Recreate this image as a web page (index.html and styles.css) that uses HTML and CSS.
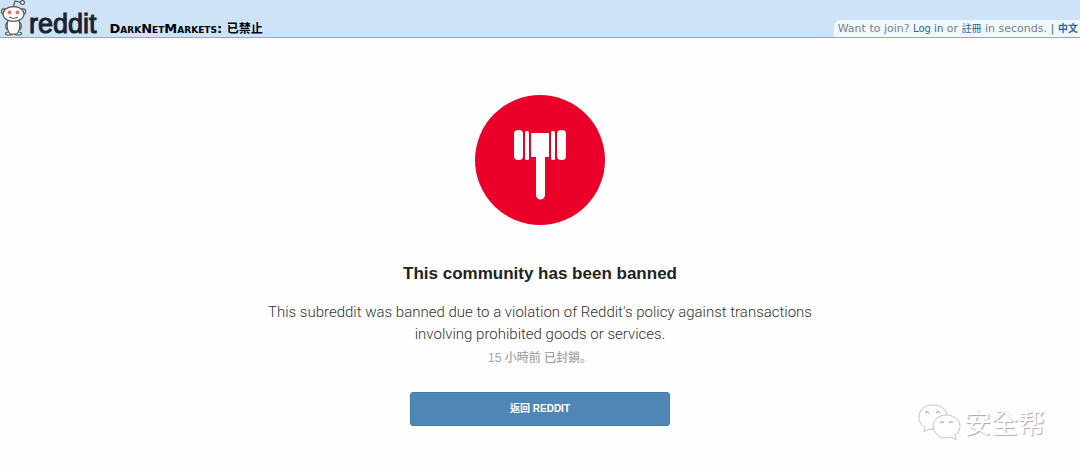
FILE: index.html
```html
<!DOCTYPE html>
<html lang="zh-Hant">
<head>
<meta charset="utf-8">
<meta name="viewport" content="width=device-width, initial-scale=1">
<title>DarkNetMarkets: 已禁止</title>
<link rel="stylesheet" href="styles.css">
</head>
<body>
<header class="header">
  <a class="logo" href="#" aria-label="reddit">
    <svg class="alien" viewBox="0 0 27 37" aria-hidden="true">
      <g fill="#fff" stroke="#555" stroke-width="1.2">
        <path d="M13 8 15 1 21 2.500" fill="none"/>
        <circle cx="22.500" cy="2.500" r="1.900"/>
        <circle cx="4" cy="11.500" r="2.600"/>
        <circle cx="23" cy="11.500" r="2.600"/>
        <path d="M8 22C5 23 5 29 8 30M19 22C22 23 22 29 19 30"/>
        <ellipse cx="9" cy="33.500" rx="3.500" ry="1.500"/>
        <ellipse cx="18" cy="33.500" rx="3.500" ry="1.500"/>
        <path d="M8 20h11c1.500 5 1 10-2 14h-7C7 30 6.500 25 8 20Z"/>
        <ellipse cx="13.500" cy="14" rx="10.500" ry="7.300"/>
      </g>
      <circle cx="9.500" cy="12.300" r="1.900" fill="#e8705a"/>
      <circle cx="17.500" cy="12.300" r="1.900" fill="#e8705a"/>
      <path d="M9 17q4.500 3 9 0" fill="none" stroke="#555"/>
    </svg>
    <span class="wordmark">reddit</span>
  </a>
  <h1 class="pagename">DarkNetMarkets: <span class="status">已禁止</span></h1>
  <div class="userbar">Want to join? <a href="#">Log in</a> or <a href="#">註冊</a> in seconds. <span class="sep">|</span> <a class="lang" href="#">中文</a></div>
</header>
<main class="notice">
  <svg class="gavel" viewBox="0 0 130 130" role="img" aria-label="Banned">
    <circle cx="65" cy="65" r="65" fill="#eb0029"/>
    <g fill="#fff">
      <rect x="39" y="35" width="9" height="30" rx="4"/>
      <rect x="50" y="36" width="4" height="29" rx="1.500"/>
      <path d="M56 38h18v24h-4v38a4.500 4.500 0 0 1-9 0V62h-5z"/>
      <rect x="76" y="36" width="4" height="29" rx="1.500"/>
      <rect x="82" y="35" width="9" height="30" rx="4"/>
    </g>
  </svg>
  <h2 class="title">This community has been banned</h2>
  <p class="reason">This subreddit was banned due to a violation of Reddit's policy against transactions involving prohibited goods or services.</p>
  <p class="time" lang="zh-Hans">15 小時前 已封鎖。</p>
  <a class="back" href="#">返回 REDDIT</a>
</main>
<div class="watermark">
  <svg class="bubbles" viewBox="0 0 44 38" aria-hidden="true">
    <g fill="#fff" stroke="#c4c4c4" stroke-width="1">
      <path d="M16 2C8 2 2 7 2 14c0 5 2 8 6 10l-1 5 5-3c10 2 18-4 18-12S24 2 16 2Z"/>
      <path d="M29 12c-7 0-13 5-13 11s6 12 13 12l5-1 5 3-1-5c3-2 5-5 5-9 0-6-6-11-14-11Z"/>
    </g>
    <path d="M8 10q2-3 4 0M19 10q2-3 4 0M23 20q2-3 4 0M32 20q2-3 4 0" fill="none" stroke="#999"/>
  </svg>
  <span>安全帮</span>
</div>
</body>
</html>
```
FILE: styles.css
```css
body {
  margin: 0;
  background: #fefefe;
  font-family: "Liberation Sans", "Noto Sans CJK TC", sans-serif;
}

a {
  color: #369;
  text-decoration: none;
}

.header {
  display: flex;
  align-items: flex-end;
  height: 37px;
  background: #cee3f8;
  border-bottom: 1px solid #7faed0;
}

.logo {
  display: flex;
  align-items: flex-end;
  gap: 2px;
}

.alien {
  width: 27px;
  height: 37px;
}

.wordmark {
  color: #1c222b;
  font: 27px/26px "Liberation Sans", sans-serif;
  -webkit-text-stroke: 1px #1c222b;
}

.pagename {
  margin: 0 0 0 13px;
  color: #000;
  font: bold 13px/15px "DejaVu Sans", "Noto Sans CJK TC", sans-serif;
  font-variant: small-caps;
}

.status {
  font-size: 12px;
}

.userbar {
  margin-left: auto;
  padding: 0 2px 0 4px;
  background: #eff7ff;
  border-top-left-radius: 7px;
  color: #808080;
  font: 11px/17px "DejaVu Sans", "Noto Sans CJK TC", sans-serif;
}

.userbar a {
  font-size: 10px;
}

.sep,
.lang {
  font-weight: bold;
}

.notice {
  display: flex;
  flex-direction: column;
  align-items: center;
  padding: 57px 16px 32px;
  text-align: center;
}

.gavel {
  width: 130px;
  height: 130px;
}

.title {
  margin: 37px 0 15px;
  color: #222;
  font-size: 17px;
  line-height: 24px;
}

.reason {
  max-width: 560px;
  margin: 0;
  color: #333;
  font: 300 15px/22px Roboto, sans-serif;
}

.time {
  margin: 4px 0 25px;
  color: #a5a4a4;
  font: 500 12px/18px "Liberation Sans", "Noto Sans CJK SC", sans-serif;
}

.back {
  box-sizing: border-box;
  width: 260px;
  max-width: 100%;
  border: 1px solid #467ca8;
  border-radius: 3px;
  background: #4f86b5;
  color: #fff;
  font-size: 10px;
  font-weight: bold;
  line-height: 32px;
}

.watermark {
  position: absolute;
  right: 35px;
  bottom: 28px;
  display: flex;
  align-items: center;
  gap: 3px;
  color: #fff;
  font: 27px/38px "Noto Sans CJK SC", sans-serif;
  text-shadow: 1px 1px 1px #aaa;
}

.bubbles {
  width: 44px;
  height: 38px;
}
```
